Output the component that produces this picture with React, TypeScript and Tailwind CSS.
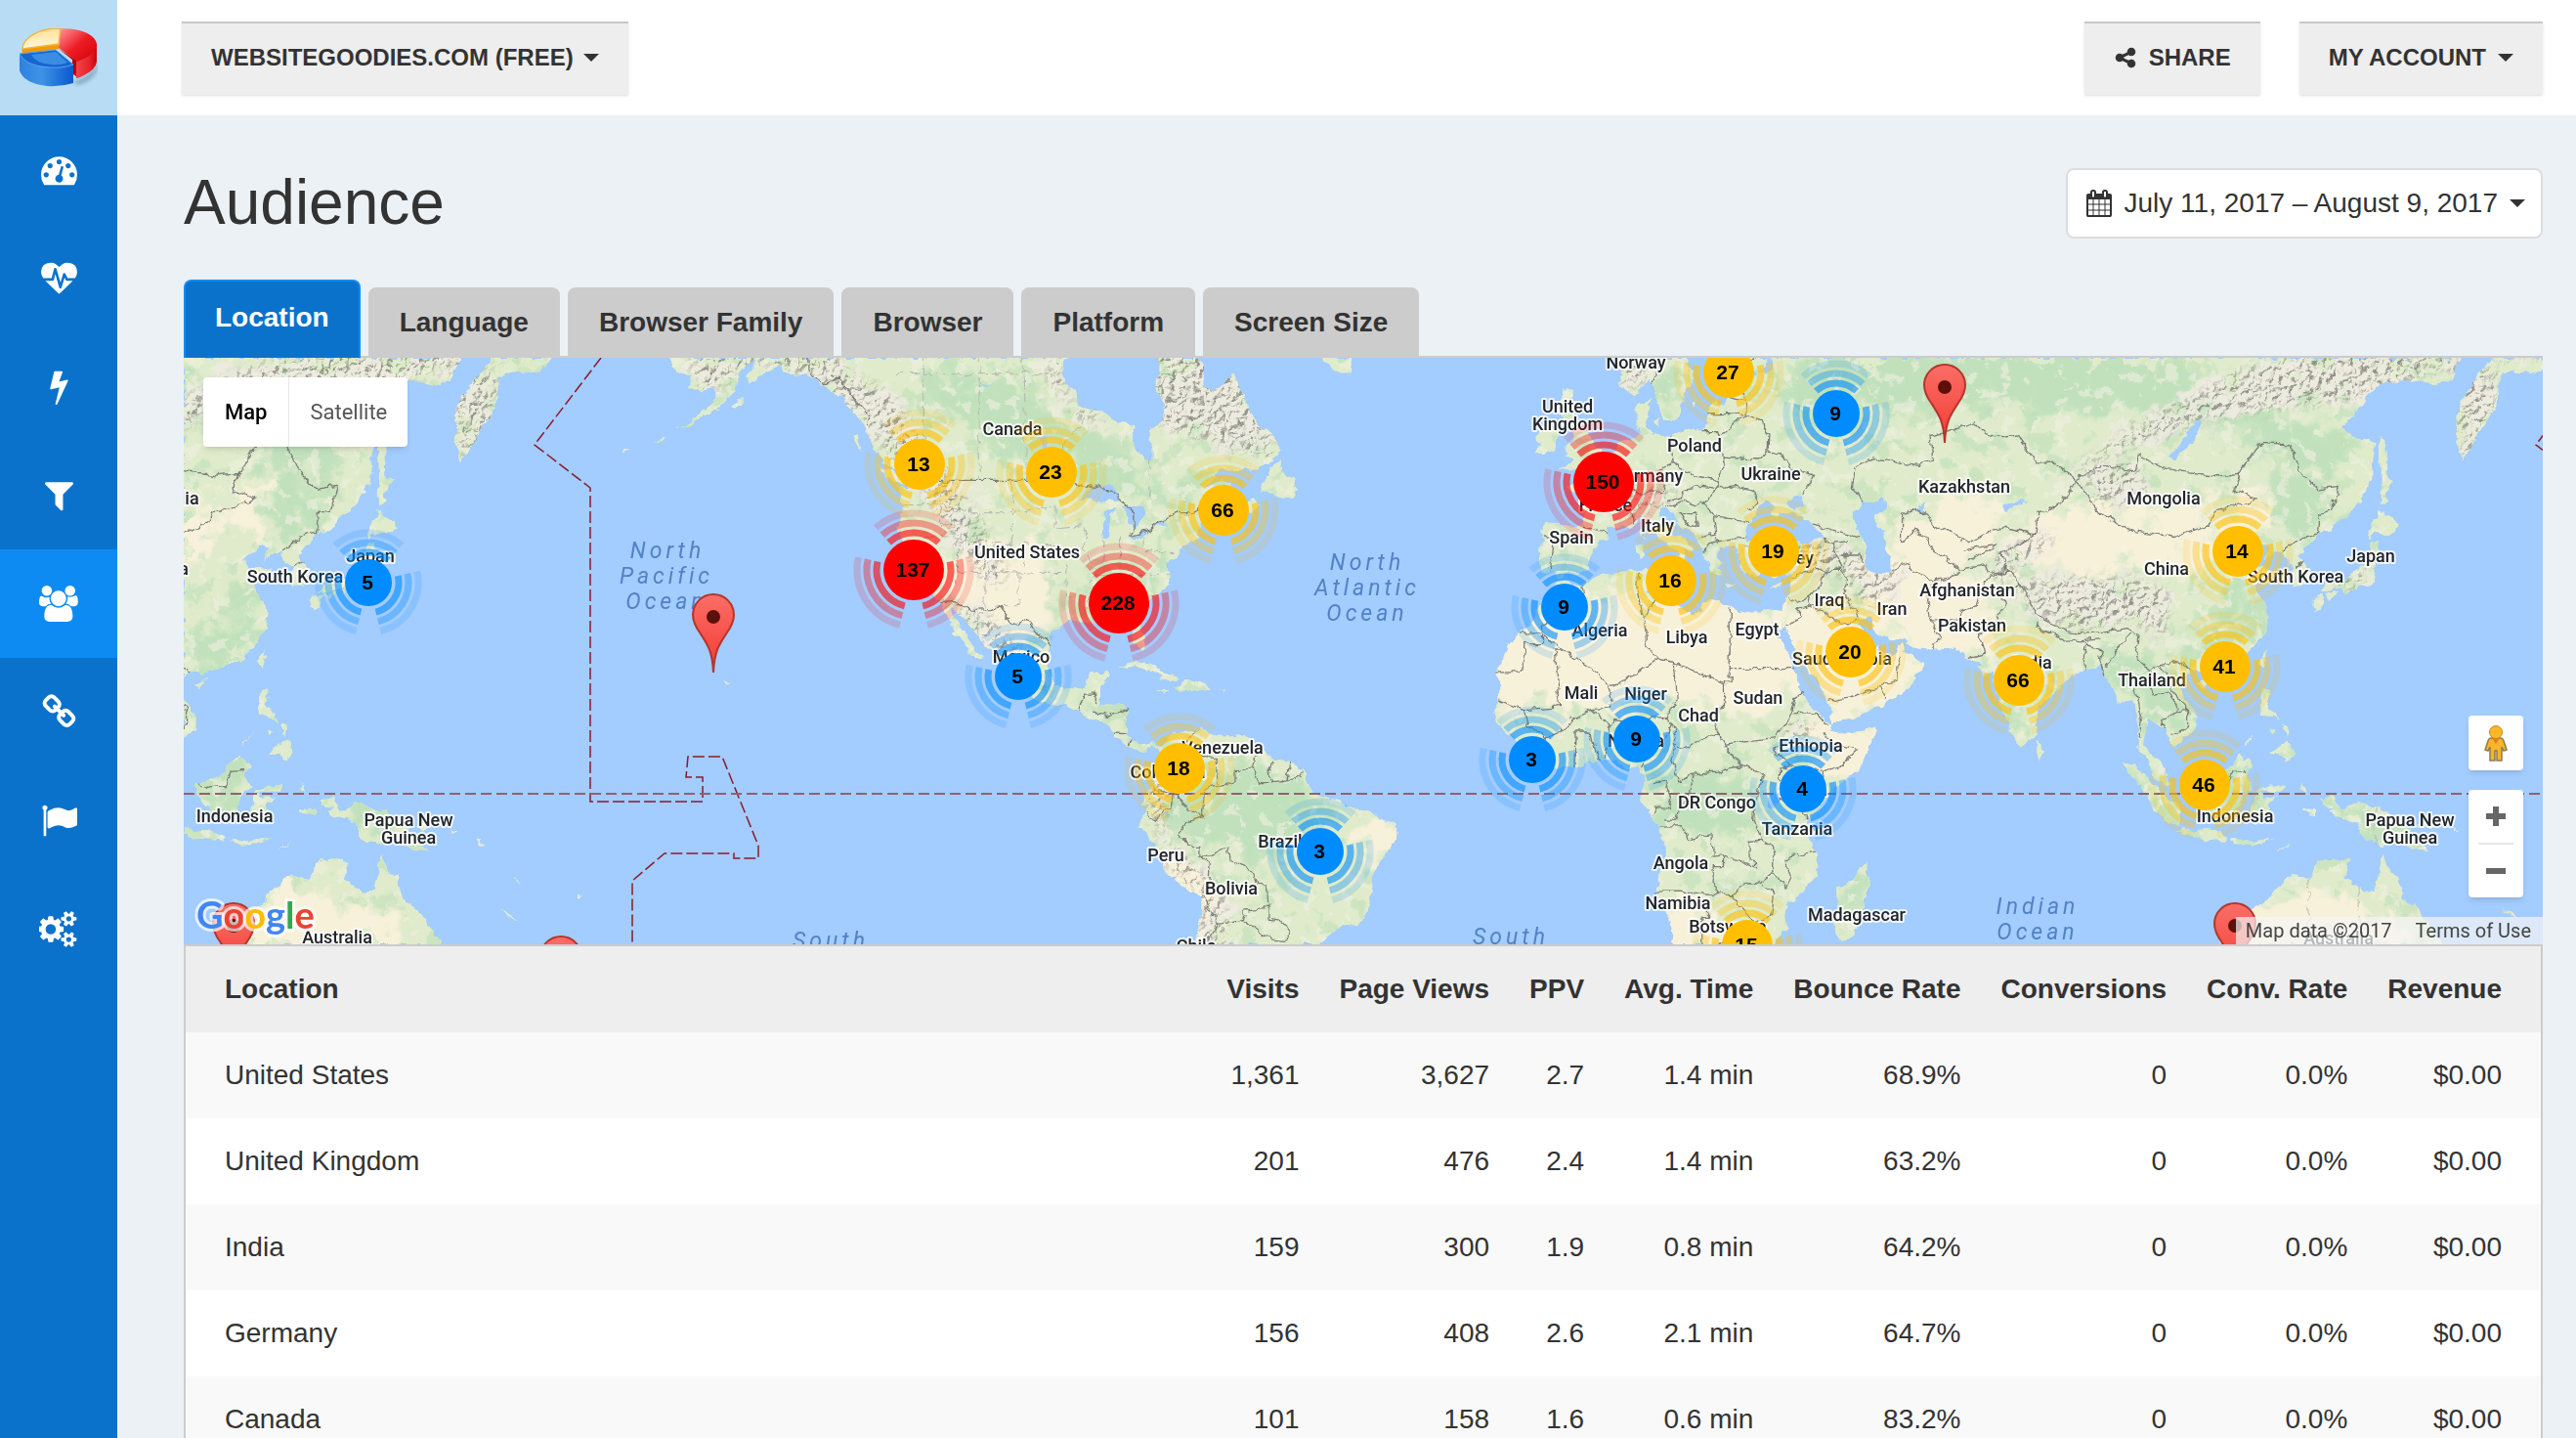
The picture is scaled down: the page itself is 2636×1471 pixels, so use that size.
import React from 'react';
import { clsx } from 'clsx';

// ---------------------------------------------------------------------------
// Icons
// ---------------------------------------------------------------------------

const icons = {
  dashboard: {
    width: 1792,
    d: 'M384 1152q0-53-37.5-90.5t-90.5-37.5-90.5 37.5-37.5 90.5 37.5 90.5 90.5 37.5 90.5-37.5 37.5-90.5zm192-448q0-53-37.5-90.5t-90.5-37.5-90.5 37.5-37.5 90.5 37.5 90.5 90.5 37.5 90.5-37.5 37.5-90.5zm428 481l101-382q6-26-7.5-48.5t-38.5-29.5-48 6.5-30 39.5l-101 382q-60 5-107 43.5t-63 98.5q-20 77 20 146t117 89 146-20 89-117q16-60-6-117t-72-91zm660-33q0-53-37.5-90.5t-90.5-37.5-90.5 37.5-37.5 90.5 37.5 90.5 90.5 37.5 90.5-37.5 37.5-90.5zm-640-640q0-53-37.5-90.5t-90.5-37.5-90.5 37.5-37.5 90.5 37.5 90.5 90.5 37.5 90.5-37.5 37.5-90.5zm448 192q0-53-37.5-90.5t-90.5-37.5-90.5 37.5-37.5 90.5 37.5 90.5 90.5 37.5 90.5-37.5 37.5-90.5zm320 448q0 261-141 483-19 29-54 29h-1402q-35 0-54-29-141-221-141-483 0-182 71-348t191-286 286-191 348-71 348 71 286 191 191 286 71 348z',
  },
  heartbeat: {
    width: 1792,
    d: 'M1280 1024h305q-5 6-10 10.5t-9 7.5l-3 4-623 600q-18 18-44 18t-44-18l-624-602q-5-2-21-20h369q22 0 39.5-13.5t22.5-34.5l70-281 190 667q6 20 23 33t39 13q21 0 38-13t23-33l146-485 56 112q18 35 57 35zm512-428q0 145-103 300h-369l-111-221q-8-17-25.5-27t-36.5-8q-45 5-56 46l-129 430-196-686q-6-20-23.5-33t-39.5-13-39 13.5-22 34.5l-116 464h-423q-103-155-103-300 0-220 127-344t351-124q62 0 126.5 21.5t120 58 95.5 68.5 76 68q36-36 76-68t95.5-68.5 120-58 126.5-21.5q224 0 351 124t127 344z',
  },
  bolt: {
    width: 1792,
    d: 'M1333 566q18 20 7 44l-540 1157q-13 25-42 25-4 0-14-2-17-5-25.5-19t-4.5-30l197-808-406 101q-4 1-12 1-18 0-31-11-18-15-13-39l201-825q4-14 16-23t28-9h328q19 0 32 12.5t13 29.5q0 8-5 18l-171 463 396-98q8-2 12-2 19 0 34 15z',
  },
  filter: {
    width: 1792,
    d: 'M1595 295q17 41-14 70l-493 493v742q0 42-39 59-13 5-25 5-27 0-45-19l-256-256q-19-19-19-45v-486l-493-493q-31-29-14-70 17-39 59-39h1280q42 0 59 39z',
  },
  users: {
    width: 1920,
    d: 'M593 896q-162 5-265 128h-134q-82 0-138-40.5t-56-118.5q0-353 124-353 6 0 43.5 21t97.5 42.5 119 21.5q67 0 133-23-5 37-5 66 0 159 90 283zm1071 637q0 120-73 189.5t-194 69.5h-874q-121 0-194-69.5t-73-189.5q0-53 3.5-103.5t14-109 26.5-108.5 43-97.5 62-81 85.5-53.5 111.5-20q10 0 43 21.5t73 48 107 48 135 21.5 135-21.5 107-48 73-48 43-21.5q61 0 111.5 20t85.5 53.5 62 81 43 97.5 26.5 108.5 14 109 3.5 103.5zm-1024-1277q0 106-75 181t-181 75-181-75-75-181 75-181 181-75 181 75 75 181zm704 384q0 159-112.5 271.5t-271.5 112.5-271.5-112.5-112.5-271.5 112.5-271.5 271.5-112.5 271.5 112.5 112.5 271.5zm576 225q0 78-56 118.5t-138 40.5h-134q-103-123-265-128 90-124 90-283 0-29-5-66 66 23 133 23 59 0 119-21.5t97.5-42.5 43.5-21q124 0 124 353zm-128-609q0 106-75 181t-181 75-181-75-75-181 75-181 181-75 181 75 75 181z',
  },
  link: {
    width: 1792,
    d: 'M1520 1216q0-40-28-68l-208-208q-28-28-68-28-42 0-72 32 3 3 19 18.5t21.5 21.5 15 19 13 25.5 3.5 27.5q0 40-28 68t-68 28q-15 0-27.5-3.5t-25.5-13-19-15-21.5-21.5-18.5-19q-33 31-33 73 0 40 28 68l206 207q27 27 68 27 40 0 68-26l147-146q28-28 28-67zm-703-705q0-40-28-68l-206-207q-28-28-68-28-39 0-68 27l-147 146q-28 28-28 67 0 40 28 68l208 208q27 27 68 27 42 0 72-31-3-3-19-18.5t-21.5-21.5-15-19-13-25.5-3.5-27.5q0-40 28-68t68-28q15 0 27.5 3.5t25.5 13 19 15 21.5 21.5 18.5 19q33-31 33-73zm895 705q0 120-85 203l-147 146q-83 83-203 83-121 0-204-85l-206-207q-83-83-83-203 0-123 88-209l-88-88q-86 88-208 88-120 0-204-84l-208-208q-84-84-84-204t85-203l147-146q83-83 203-83 121 0 204 85l206 207q83 83 83 203 0 123-88 209l88 88q86-88 208-88 120 0 204 84l208 208q84 84 84 204z',
  },
  flag: {
    width: 1792,
    d: 'M320 256q0 72-64 110v1266q0 13-9.5 22.5t-22.5 9.5h-64q-13 0-22.5-9.5t-9.5-22.5v-1266q-64-38-64-110 0-53 37.5-90.5t90.5-37.5 90.5 37.5 37.5 90.5zm1472 64v763q0 25-12.5 38.5t-39.5 27.5q-215 116-369 116-61 0-123.5-22t-108.5-48-115.5-48-142.5-22q-192 0-464 146-17 9-33 9-26 0-45-19t-19-45v-742q0-32 31-55 21-14 79-43 236-120 421-120 107 0 200 29t219 88q38 19 88 19 54 0 117.5-21t110-47 88-47 54.5-21q26 0 45 19t19 45z',
  },
  cogs: {
    width: 1920,
    d: 'M832 896q0-106-75-181t-181-75-181 75-75 181 75 181 181 75 181-75 75-181zm768 512q0-52-38-90t-90-38-90 38-38 90q0 53 37.5 90.5t90.5 37.5 90.5-37.5 37.5-90.5zm0-1024q0-52-38-90t-90-38-90 38-38 90q0 53 37.5 90.5t90.5 37.5 90.5-37.5 37.5-90.5zm-384 421v185q0 10-7 19.5t-16 10.5l-155 24q-11 35-32 76 34 48 90 115 7 11 7 20 0 12-7 19-23 30-82.5 89.5t-78.5 59.5q-11 0-21-7l-115-90q-37 19-77 31-11 108-23 155-7 24-30 24h-186q-11 0-20-7.5t-10-17.5l-23-153q-34-10-75-31l-118 89q-7 7-20 7-11 0-21-8-144-133-144-160 0-9 7-19 10-14 41-53t47-61q-23-44-35-82l-152-24q-10-1-17-9.5t-7-19.5v-185q0-10 7-19.5t16-10.5l155-24q11-35 32-76-34-48-90-115-7-11-7-20 0-12 7-20 22-30 82-89t79-59q11 0 21 7l115 90q34-18 77-32 11-108 23-154 7-24 30-24h186q11 0 20 7.5t10 17.5l23 153q34 10 75 31l118-89q8-7 20-7 11 0 21 8 144 133 144 160 0 8-7 19-12 16-42 54t-45 60q23 48 34 82l152 23q10 2 17 10.5t7 19.5zm640 533v140q0 16-149 31-12 27-30 52 51 113 51 138 0 4-4 7-122 71-124 71-8 0-46-47t-52-68q-20 2-30 2t-30-2q-14 21-52 68t-46 47q-2 0-124-71-4-3-4-7 0-25 51-138-18-25-30-52-149-15-149-31v-140q0-16 149-31 13-29 30-52-51-113-51-138 0-4 4-7 4-2 35-20t59-34 30-16q8 0 46 46.5t52 67.5q20-2 30-2t30 2q51-71 92-112l6-2q4 0 124 70 4 3 4 7 0 25-51 138 17 23 30 52 149 15 149 31zm0-1024v140q0 16-149 31-12 27-30 52 51 113 51 138 0 4-4 7-122 71-124 71-8 0-46-47t-52-68q-20 2-30 2t-30-2q-14 21-52 68t-46 47q-2 0-124-71-4-3-4-7 0-25 51-138-18-25-30-52-149-15-149-31v-140q0-16 149-31 13-29 30-52-51-113-51-138 0-4 4-7 4-2 35-20t59-34 30-16q8 0 46 46.5t52 67.5q20-2 30-2t30 2q51-71 92-112l6-2q4 0 124 70 4 3 4 7 0 25-51 138 17 23 30 52 149 15 149 31z',
  },
  share: {
    width: 1792,
    d: 'M1344 1024q133 0 226.5 93.5t93.5 226.5-93.5 226.5-226.5 93.5-226.5-93.5-93.5-226.5q0-12 2-34l-360-180q-92 86-218 86-133 0-226.5-93.5t-93.5-226.5 93.5-226.5 226.5-93.5q126 0 218 86l360-180q-2-22-2-34 0-133 93.5-226.5t226.5-93.5 226.5 93.5 93.5 226.5-93.5 226.5-226.5 93.5q-126 0-218-86l-360 180q2 22 2 34t-2 34l360 180q92-86 218-86z',
  },
  calendar: {
    width: 1792,
    d: 'M192 1664h288v-288h-288v288zm352 0h320v-288h-320v288zm-352-352h288v-320h-288v320zm352 0h320v-320h-320v320zm-352-384h288v-288h-288v288zm736 736h320v-288h-320v288zm-384-736h320v-288h-320v288zm768 736h288v-288h-288v288zm-384-352h320v-320h-320v320zm-352-864v-288q0-13-9.5-22.5t-22.5-9.5h-64q-13 0-22.5 9.5t-9.5 22.5v288q0 13 9.5 22.5t22.5 9.5h64q13 0 22.5-9.5t9.5-22.5zm736 864h288v-320h-288v320zm-384-384h320v-288h-320v288zm384 0h288v-288h-288v288zm32-480v-288q0-13-9.5-22.5t-22.5-9.5h-64q-13 0-22.5 9.5t-9.5 22.5v288q0 13 9.5 22.5t22.5 9.5h64q13 0 22.5-9.5t9.5-22.5zm384-64v1280q0 52-38 90t-90 38h-1408q-52 0-90-38t-38-90v-1280q0-52 38-90t90-38h128v-96q0-66 47-113t113-47h64q66 0 113 47t47 113v96h384v-96q0-66 47-113t113-47h64q66 0 113 47t47 113v96h128q52 0 90 38t38 90z',
  },
};

type IconName = keyof typeof icons;

const Icon = ({ name, className }: { name: IconName; className?: string }) => (
  <svg viewBox={`0 0 ${icons[name].width} 1792`} className={className} fill="currentColor" aria-hidden="true">
    <path d={icons[name].d} />
  </svg>
);

const Caret = () => (
  <svg viewBox="0 0 16 8" className="h-2 w-4" fill="currentColor" aria-hidden="true">
    <path d="M0 0h16L8 8z" />
  </svg>
);

const Logo = () => (
  <svg viewBox="0 0 80 60" className="h-[60px] w-20" aria-hidden="true">
    <defs>
      <linearGradient id="logo-red" x1="0" y1="0" x2="1" y2="1">
        <stop offset="0" stopColor="#ff9ba0" />
        <stop offset="0.5" stopColor="#ee1c25" />
        <stop offset="1" stopColor="#d00006" />
      </linearGradient>
      <linearGradient id="logo-red-side" x1="0" y1="0" x2="1" y2="0">
        <stop offset="0" stopColor="#f0444a" />
        <stop offset="0.6" stopColor="#e8262d" />
        <stop offset="1" stopColor="#c9050b" />
      </linearGradient>
      <linearGradient id="logo-yellow" x1="0" y1="0" x2="0" y2="1">
        <stop offset="0" stopColor="#ffe19a" />
        <stop offset="1" stopColor="#fff6dc" />
      </linearGradient>
      <linearGradient id="logo-blue" x1="0" y1="0" x2="1" y2="0">
        <stop offset="0" stopColor="#2b82e0" />
        <stop offset="0.4" stopColor="#3f93e6" />
        <stop offset="1" stopColor="#0a58cf" />
      </linearGradient>
      <filter id="logo-shadow">
        <feGaussianBlur stdDeviation="2" />
      </filter>
    </defs>
    <path d="M56 54q20-5 24-22v8q-4 14-22 18z" fill="#5c7f9c" opacity="0.6" filter="url(#logo-shadow)" />
    <path d="M40 21L60 34v17l-6-5V32z" fill="#b30006" />
    <path d="M58 34v17q3 0 8-3 12-6 13-14V18z" fill="url(#logo-red-side)" />
    <path d="M42 0q22 0 32 8 6 5 5 12-4 8-20 14L40 20z" fill="url(#logo-red)" />
    <path d="M3 20q-1 3 0 7l37-6v-6z" fill="#f09a0a" />
    <path d="M42 0Q20 0 9 10 3 15 3 21l37-5z" fill="url(#logo-yellow)" stroke="#f3b53c" strokeWidth="1.5" />
    <path d="M0 26v17q4 13 28 16 14 1 27-3V37z" fill="url(#logo-blue)" />
    <path d="M0 26l37-4 18 15q-10 4-25 3Q5 38 0 26z" fill="#1765cf" stroke="#55a4f2" strokeWidth="1" />
    <path d="M12 27l25-3 12 11q-8 3-17 2-15-1-20-10z" fill="#3a8de4" />
  </svg>
);

// ---------------------------------------------------------------------------
// Map data. Coordinates are "lon,lat" pairs.
// ---------------------------------------------------------------------------

const landShapes = [
  // Americas
  '-168,66 -161,66.5 -162,64.5 -165,64.3 -161,63.5 -164.5,63 -166,61.7 -165,60.5 -162,59.9 -162,58.7 -158.8,58.5 -157.5,58.7 -158,57.5 -160.5,56 -163,55 -164.8,54.6 -162,55.1 -160,55.8 -157,56.8 -154,58.3 -153.5,59.5 -151.8,60.8 -150,61.2 -151.5,60 -151.8,59.2 -149.5,59.8 -148,60.2 -146,60.7 -144,60 -141,59.9 -139.5,59.6 -137,58.5 -135,58.2 -133.5,57 -132,56 -130.5,54.8 -130,53.8 -128.5,52.5 -127.5,51.2 -125,50.1 -123.2,49.2 -122.5,48 -124.6,48.3 -124,46.3 -124.2,44 -124.4,42.8 -124.1,40.8 -123.7,39 -122.5,37.7 -121.9,36.6 -120.6,34.6 -118.5,34 -117.2,32.8 -116.6,31.5 -115.8,30.3 -115.2,28.8 -114.2,28 -115,27.8 -114,27 -112.8,26.4 -112.1,24.9 -110.5,23.4 -109.5,23.1 -109.7,23.9 -110.6,24.5 -111.4,26.2 -112.7,27.8 -113.4,29 -114.7,30.5 -114.9,31.7 -113.7,31.4 -112.8,30.2 -111.3,28.2 -110,27.1 -109.3,26 -108,24.9 -106.4,23.2 -105.5,21.8 -105.6,20.4 -104.3,19.2 -102,18 -99.8,16.8 -97.8,15.9 -95.8,15.8 -94.5,16.2 -93,15 -91.5,13.9 -89.5,13.3 -87.6,13 -86.8,12 -85.7,10.9 -85.8,10.1 -84.8,9.8 -83.6,8.6 -82.8,8.2 -81.2,7.6 -80.2,7.4 -80,8.2 -79,8.9 -78.2,8 -77.4,7.2 -77.5,5.5 -77.2,4 -78.6,2.3 -79,1.5 -80,0.5 -80.1,-0.8 -80.9,-2 -80,-2.6 -80.3,-3.4 -81.3,-4.4 -81.2,-6 -79.8,-7.3 -78.5,-9.5 -77.2,-12 -76.2,-13.9 -74.5,-15.8 -72,-17.2 -70.4,-18.4 -70.1,-21 -70.5,-24 -70.9,-27 -71.5,-31 -60,-40 -53,-33 -50,-29.5 -48.6,-26 -48,-25.2 -46.5,-24 -44.5,-23 -42,-22.9 -40.8,-21.8 -39.7,-19.5 -39.2,-17 -38.9,-13.5 -37.5,-11.8 -36.2,-10 -35,-8 -34.9,-6.8 -35.4,-5.2 -37.2,-4.8 -38.6,-3.6 -40.5,-2.8 -42.5,-2.7 -44.3,-2.6 -45,-1.4 -47.5,-0.6 -48.5,-1 -50,0.2 -50.8,1.8 -51.8,4.2 -54,5.8 -57,6 -59,8.3 -61,9.3 -62,10.6 -64.5,10.1 -66,10.5 -68.2,10.7 -69.8,11.6 -70,12.1 -71.4,11 -72,11.6 -73.2,11.3 -74.9,11 -75.6,10.4 -76.8,8.6 -77.4,8.5 -79,9.5 -80.8,8.9 -82.2,9.1 -83.6,10.8 -83.7,12.4 -83.3,14.8 -85,15.9 -87.8,15.9 -88.6,16 -88.2,18.2 -87.5,19.5 -87,21.4 -88.5,21.5 -90.3,21 -90.8,19.2 -92,18.6 -94.5,18.2 -96,19 -97.3,20.8 -97.8,22.6 -97.4,25.5 -97.2,27.6 -95.2,29 -93.8,29.7 -91.5,29.4 -90.2,29.1 -89.3,29.3 -89.6,30.2 -87.5,30.3 -85.5,29.9 -84,30.1 -82.8,29 -82.7,27.6 -81.8,26 -81,25.2 -80.3,25.4 -80.1,26.9 -80.8,28.6 -81.4,30.6 -81,32 -79.3,33.1 -77.8,34 -76.5,34.7 -75.6,35.3 -76,36.9 -76.3,38.8 -75,38.6 -74.2,39.6 -74,40.6 -72,41.1 -70.2,41.7 -70.8,42.7 -70,43.8 -67.8,44.5 -66.5,45.2 -64.8,45.8 -66,43.9 -65.3,43.6 -63.5,44.6 -61,45.3 -60,46 -61,46.8 -63,45.9 -64.8,46.6 -65,47.8 -64.4,48.8 -66.5,49.1 -69.5,48 -71,46.9 -68.5,48.8 -66.8,50.1 -64,50.3 -60,50.2 -57.2,51.4 -55.8,52.3 -57.5,54.4 -60,55.2 -61.5,56.5 -62.5,58.2 -64.5,60.2 -65.5,59.5 -66.3,58.8 -68,58.5 -69.5,58.9 -69.8,60.8 -71.5,61.5 -74,62.3 -78,62.5 -77.5,60 -78.5,58.7 -76.6,57.2 -77,55.5 -79.5,54.7 -79,53 -79,51.5 -80.3,51.2 -82,52.9 -82.2,55.1 -85,55.3 -88,56.5 -92,57 -93,58.7 -94.8,59.2 -94.8,61 -93.5,62 -91,63.5 -90,66',
  '-59.3,47.6 -57.5,50.6 -55.5,51.6 -56,50 -53.5,49.2 -52.7,47.5 -53.8,46.8 -55.8,46.9',
  '-128.3,50.7 -125.2,50 -123.5,48.4 -125.5,48.8',
  '-133,54 -131.7,54 -131.2,52.2',
  '-154.5,57 -152.5,58 -152.5,57.3',
  '-168.5,53.3 -166.5,54 -167,53.3',
  '-174,52.1 -174,52.5 -172.5,52.4',
  '-84.9,21.9 -83,23 -80.5,23.1 -77,21.6 -74.2,20.2 -77.6,19.9 -77.2,20.7 -79.5,21.6 -82,22.4',
  '-74.4,18.4 -73.3,19.9 -70,19.8 -68.4,18.6 -70.5,18.2 -72.5,18.1',
  '-78.3,18.4 -76.3,18.1 -77,17.8',
  '-67.2,18.4 -65.7,18.3 -66,18',
  '-156,20.2 -154.9,19.5 -155.7,19',
  '-50,63 -48,61 -45.5,60.2 -43.5,60 -42.5,61.5 -42,63',
  // Eurasia
  '5,61.9 5,60 5.6,58.8 7.5,58.1 9.8,59 10.6,59.5 11.3,58.8 12.4,56.6 13,55.5 14.3,55.6 16,56.3 16.8,58.4 18.8,59.8 17.3,61 17.4,62.5 21,63 21.5,61 22.8,60 25,60.2 28.5,60.6 30,59.9 27.8,59.5 24,59.3 23.5,58.7 24.4,58.2 24.2,57.1 22.5,57.6 21.2,56.8 21,55.3 19.8,54.5 18.5,54.7 16.5,54.4 14.2,53.9 11,54.1 10.8,54.4 9.9,55 10.3,56.4 10.6,57.6 8.2,57 8.2,55.5 8.8,54.1 7,53.5 5,53.2 4,51.9 2.5,51.1 1.6,50.4 0.2,49.6 -1.3,49.5 -1.9,48.7 -4.6,48.5 -4.3,47.8 -2.2,47.2 -1.2,45.8 -1.5,43.5 -4,43.4 -8.2,43.7 -9.1,42.8 -8.8,41 -9.4,38.8 -8.9,37.1 -6.5,37 -5.6,36 -4.4,36.7 -2,36.8 -0.6,37.8 0,39 0.2,40.5 3,41.8 3.1,43.2 5,43.3 6.8,43.2 8.8,44.4 10.2,43.8 12.2,41.8 14.3,40.8 15.7,39.8 16.1,38 16.6,38.6 17.1,39.2 16.8,40.4 18.4,39.9 18,40.7 16,41.8 14,42.6 12.5,44.3 12.5,45.5 13.7,45.5 14.5,45.1 16,43.6 18.5,42.3 19.5,41 20.3,39.3 21.3,38.2 21.7,36.9 23,36.5 23.3,37.8 24,38 22.8,39.3 22.8,40.5 24,40.3 26,40.8 26.2,40 26.8,38.5 27.5,37 29.5,36.3 31,36.8 33,36.1 34.5,36.7 36,36.7 35.8,35 34.9,32.8 34.2,31.3 32.5,31.2 32.6,29.9 34.2,27.9 34.9,29.4 35.5,27.5 37.2,25 39,21.8 40.8,19.5 42.6,16.5 43.3,12.7 45,12.8 48.5,14 52,15.6 55,17.2 57.7,19.2 59.8,22.5 58.5,23.7 56.6,24.8 56.3,26.2 54.5,24.3 51.8,24.1 51.4,25.9 50.8,25.3 50,26.6 48.2,29 48,30 50,30.1 51,28 54,26.6 56.8,27.1 57.5,25.6 61.5,25.1 66.5,25.3 67.5,23.8 70,22.8 69,22.3 70.5,20.8 72.5,21.5 72.8,19 73.5,16 74.8,13 76.2,10 77.5,8.1 78.3,9 79.9,10.4 80.2,13.2 80.2,15.5 82.3,16.6 85,19.5 87,21.4 90,22 91.8,22.5 92.3,20.8 94.3,18 94.4,16 96.8,16.8 97.7,15.8 98.6,12 98.3,8.2 100.2,6.2 101.3,3 103.5,1.3 104.2,1.5 103.4,4 102.2,6.2 100.5,7.3 99.3,9.3 100,12 100.1,13.4 101,12.7 102.8,11.8 103.6,10.5 104.8,8.7 106.6,9.8 109,11.5 109.2,13.5 107.2,16.6 105.8,18.8 106.7,20.5 108,21.6 109.8,21.4 110.3,20.4 110.6,21.3 113.5,22.2 116.5,23 119,25.3 121.6,28.3 121.9,30.5 121.5,32 119.3,34.8 120.8,36.2 122.5,37.1 120.5,37.8 119,37.3 117.8,38.8 119.5,39.8 121.3,40.9 122,40.3 121.3,38.9 124.3,40 125.3,38.5 126.5,37.5 126.3,34.8 129,35.2 129.4,37 127.5,39.3 129.8,41.2 130.8,42.4 133,42.8 135.5,44.5 138.3,46.5 140.5,49 140.5,51.5 141.3,53.2 137.5,53.8 135.2,54.8 138.5,57 142,59.2 148,59.4 152,59 155,59.5 156.5,61.5 160,61.9 163.5,62.3 161,60.7 157,58 155.8,56.5 155.7,53 156.8,51 158.5,52.9 160,54.5 162,56 163.3,57.8 163.5,59.8 166,60.2 170.5,60 173,61.5 177,62.5 180,63 180,68 5,68',
  // Africa
  '-5.9,35.8 -2,35.1 3,36.9 9.8,37.3 11,36.8 10.2,34.3 13,32.9 15.3,32.3 19,30.3 20.2,32.3 23,32.7 27,31.2 29,30.9 31,31.5 32.5,31.2 32.5,29.9 33.8,27.3 35.5,24 37.2,21 37.4,18.8 39.7,15.2 43,12.5 43.2,11.4 46,10.7 51.2,11.9 50.8,9.5 48,4.5 44,1 41.5,-1.8 39.5,-4.6 38.8,-6.5 39.4,-8.5 40.6,-10.8 40.7,-14.8 38,-17.2 35,-19.8 35.5,-23.5 32.8,-25.5 32.8,-28 28,-34 18,-34 15,-27 14.4,-22.5 12,-18 12.4,-14 13.7,-11 13,-8.8 12.2,-5.8 9.6,-2.4 8.8,-0.8 9.6,1 9.8,3.3 8.5,4.6 6.2,4.3 4.5,6.2 1,6 -2,4.8 -4.5,5.2 -7.5,4.4 -10,6 -13,8 -14,10 -16.7,12.3 -17.4,14.7 -16.3,17.5 -16.3,19.5 -17,21 -16,23.7 -14.5,26.3 -12.9,27.9 -10,29.6 -9.7,31.5 -8,33.5',
  '49.3,-12.1 50.4,-15.6 49.5,-17.8 47.2,-25 45,-25.5 43.4,-22.5 44.4,-19.8 44.3,-16.6 47,-15.3',
  // British Isles, Baltic, Mediterranean
  '-5.6,50.1 -3.5,50.3 1.3,51 1.6,52.7 0.3,53 -1.2,54.6 -2,55.8 -3.2,56.2 -1.9,57.5 -4,57.7 -3.2,58.6 -5,58.6 -6,57 -5,55.8 -4.8,54.8 -3,54.2 -3.2,53.4 -4.6,53 -4.8,52 -3.2,51.4',
  '-10,52 -6.3,52.2 -6,53.5 -5.5,54.6 -7.4,55.3 -10,54.2 -9,53.2',
  '11.2,55.7 12.5,56 12,55',
  '18.3,57.3 19,57.9 18.5,57',
  '8.3,40.9 9.6,40.9 9.5,39.2 8.5,39',
  '8.7,42.5 9.4,43 9.3,41.5',
  '12.5,38 15.6,38.2 15.1,36.7',
  '23.6,35.5 26.2,35.2 24.8,34.9',
  '32.4,35 34.5,35.6 33.5,34.6',
  // Asian islands
  '79.8,8 80.2,9.7 81.8,7.5 80.6,6',
  '108.7,19.2 110.8,20 109.8,18.4',
  '120.1,23 121.6,25.2 120.9,22',
  '131,34 132.5,35.4 136,35.7 137.2,37.3 139.5,38.5 140.2,41.2 141.4,41.3 142,39.5 141,38.2 140.8,35.8 139.8,35 138.2,34.7 136.8,34.4 135.7,33.6 135,34.7 132.3,34',
  '130,33.5 131.8,33.6 131.3,31.4 130.2,31.3 129.8,32.7',
  '132.2,33.6 134.6,34.2 133,32.9',
  '140,42.5 141.8,45.4 145.5,43.3 143.2,42 141,42.5 140.2,41.5',
  '142.2,54.2 143.2,52.5 143.3,49.5 144.6,49 142.8,47.5 143.3,46.6 142,46 142,50 141.8,53',
  '120.4,16.2 120.8,18.5 122.2,18.4 121.6,15.8 124,13 122,13.8 120.6,13.9',
  '122,7 123.8,8.4 125.5,9.7 126.5,7.5 125.4,5.7 124,7',
  '122,11.8 123.2,11.2 122.2,10.5',
  '124.3,12.5 125.5,12.2 125,10.2',
  '117.3,8.5 119.5,11.2 118,9',
  '109,1.5 111.4,2.6 113.5,3.4 116.8,7 119.2,5.2 117.6,3.5 118.9,1 117.4,0.2 116.2,-3.6 114.5,-4 111.5,-3.3 110,-1.3',
  '95.3,5.6 97.5,5.2 100.5,2.3 103.5,-0.5 106,-3 105.8,-5.8 104,-5.2 101.3,-2.7 98.8,1.5',
  '105.3,-6.7 106.5,-6 108.6,-6.7 111,-6.5 114.4,-7.8 114.3,-8.6 108.5,-7.8',
  '115,-8.3 117,-8.2 119,-8.3 122.8,-8.2 120,-9 116,-9',
  '123.6,-10.3 127,-8.4 125,-9.3',
  '119,-3.4 119.8,0.5 121,1.2 124.8,1.5 124.3,0.4 120.4,0.4 121,-1 123.2,-0.8 121.7,-2 122.8,-4.3 121.4,-4.5 120.4,-2.9 120.3,-5.5 119.5,-5.4',
  '127.5,1 128,2 128.6,0.3',
  '128,-2.9 130.8,-3 130.5,-3.7 128,-3.5',
  '131,-0.8 134,-0.8 135,-3.3 137.8,-1.5 141,-2.6 144.5,-3.9 147.8,-6.2 147.2,-7 150.8,-10.3 147.5,-9.8 144.5,-7.7 142.5,-9.2 139,-8.1 137.8,-5.2 133.8,-4 132.8,-2.8 134,-2.4 132,-2.1',
  '148.4,-5.7 151.5,-5 152.2,-4.2 151.8,-5.5 149.5,-6.3',
  '155,-6 156,-6.8 155.4,-6.8',
  '159.6,-8 161,-9 160,-9',
  '164,-20.2 167,-22.2 165.5,-21.7',
  '166.6,-15 167.4,-16.2 166.8,-15.8',
  '177.3,-17.6 178.6,-17.8 178,-18.4',
  // Australia
  '113.7,-22.5 114.2,-21.8 117,-20.7 119,-20 121.5,-19 122.3,-17.2 124,-16.3 126,-14.2 128,-14.8 129.6,-14.9 130.6,-12.6 132.6,-11.5 136.5,-12 136,-13.5 135.5,-15 139.3,-17.4 140.9,-17.3 141.6,-14.5 142.5,-10.8 143.7,-13.8 145.3,-15 146.2,-18.5 149,-20.5 150.8,-23.3 153,-25.3 153.5,-29 150,-38 115,-35 113.5,-26',
];

const lakeShapes = [
  '-92,46.7 -89,48.3 -86.5,48.7 -84.7,46.6 -87.5,46.5',
  '-87.8,42 -87,41.7 -86.3,43 -86.3,44.7 -85,45.9 -87.3,45.2',
  '-84.5,45.9 -80.5,45.8 -80,44.6 -81.7,43.2 -82.5,43.1 -83.5,44.3',
  '-83.3,41.8 -79,42.8 -81.5,41.6',
  '-79.7,43.3 -76.5,44.2 -76.3,43.5',
  '-99,53.8 -97.8,53.8 -96.5,50.6 -97.2,51',
  '-111,58.8 -107,59.4 -109,59',
  '28,41.3 27.6,42.6 28.7,43.8 30,45.8 31.5,46.6 33,46 32.5,45.3 33.6,44.5 35.5,45 36.6,45.2 38.5,44.2 41.3,42.5 41.4,41.5 38,41 35,42 32,41.6 29.3,41.2',
  '35,46.3 38,47.2 38,46 36.5,45.4',
  '27.3,40.6 29,40.9 28.8,40.4',
  '47,44.8 49,46.4 52.8,46.8 53,45.3 51.2,44.5 51,43.2 52.8,42.5 52.9,40.2 53.8,39 53.9,37 51,36.7 49.2,37.6 49.3,39.3 49.5,40.5 48.2,42.2 47.4,43.5',
  '58.3,45.5 60.5,46.5 59.5,45',
  '74,45.5 76,46.6 79,46.7 76,46.1 74.5,45',
  '103.7,51.6 106,53 108.8,55.6 109.8,55.6 108.2,53.2 105,51.5',
  '31,60.5 32,61.5 33,60.5 31.5,59.9',
  '31.8,-0.5 33.8,0.3 34,-1 32.8,-2.5 31.8,-2',
];

const desertShapes = [
  '-18,29 -6,31 8,34 12,33 20,33 34,32 36,32 48,31 53,27 60,24 58,17 45,12 43,13 38,17 30,16 15,14.5 0,15 -18,15.5',
  '48,37 54,43 62,47 72,47 74,44 68,39 72,31 71,24 60,24 50,31',
  '74,38 76,42 84,46 95,45 110,45 116,43 108,38 98,38 88,36',
  '-119,38 -112,42 -104,42 -99,38 -98,29 -102,24 -107,25 -114,31',
  '-41,-3 -35,-5 -36,-9 -40,-12 -44,-8',
  '114,-20 122,-18 130,-17 138,-19 146,-22 146,-35 112,-35',
  '-81,-4 -78,-10 -70,-18 -67,-22 -68,-30 -72,-30 -78,-12',
  '40,12 52,12 48,3 42,2 41,6',
  '14,-18 22,-20 24,-28 14,-28',
  '112,46 120,48 123,45 118,42',
];

const forestShapes = [
  '-78,2 -70,6 -60,6 -50,1 -47,-3 -50,-9 -58,-12 -68,-11 -76,-6',
  '10,4 18,4 29,3 29,-5 22,-7 13,-5',
  '-120,60 -108,60 -98,57 -88,54 -82,51 -78,48 -70,50 -66,47 -80,46 -95,50 -108,53 -116,55',
  '-90,36 -82,37 -76,42 -70,46 -74,42 -79,35 -84,31 -94,31',
  '30,60 45,62 62,62 80,62 100,62 112,60 104,56 98,57 86,56 74,57 60,57 50,56 38,56',
  '97,55 112,55 122,52 128,48 132,49 138,53 128,56 112,57',
  '120,50 127,51 134,45 128,41 124,44',
  '92,26 98,26 102,20 108,18 108,12 104,14 100,10 98,18 94,20',
  '106,26 118,30 121,28 116,23 108,22',
  '112,34 118,35 121,33 120,30 114,31',
  '108,4 119,7 119,-4 109,-3',
  '95,6 106,-3 104,-6 97,1',
  '130,0 142,-3 150,-9 140,-8 133,-4',
  '-92,17 -83,15 -78,9 -84,9',
  '10,60 18,61 16,57 12,57',
  '73,20 77,20 77,9 74,12',
  '43,-13 51,-13 48,-25 47,-18',
];

const mountainShapes = [
  '-162,62 -140,63 -133,60 -126,58 -119,52 -113,47 -108,41 -105,36 -108,35 -113,40 -119,47 -124,50 -131,56 -140,60 -150,61 -160,58',
  '-79,63 -64,61 -57,53 -62,52 -70,54 -78,55',
  '-96,62 -93,56 -86,55 -98,59',
  '72,39 80,42 84,42 74,36 80,31 88,28 98,30 103,27 104,34 98,36 88,36 80,36 74,34',
  '86,50 98,53 112,56 125,57 140,58 156,61 175,62 160,64 130,62 116,60 98,55',
  '155,61 163,60 163,56 157,51',
  '6,44 7,47 14,48 16,47 12,46 8,45',
  '36,42 47,40 48,38 56,38 54,34 50,32 45,37 38,37',
  '-80,0 -77,3 -73,8 -76,0 -77,-8 -70,-14 -66,-18 -66,-28 -70,-28 -70,-18 -76,-13',
  '-118,33 -108,30 -102,24 -97,18 -102,19 -108,26',
  '5,62 12,62 9,59 6,59',
  '36,14 40,12 38,7 35,9',
  '138,38 141,40 138,35 133,34',
  '88,50 98,51 100,47 92,46',
];

const borderLines = [
  '-123,49 -95,49 -89.5,48 -88.4,48.3 -84.8,46.8 -82.5,45.3 -82.4,43 -83,42 -79,42.7 -79,43.4 -76.5,44.2 -74.8,45 -71.3,45 -70,46.7 -69,47.4 -67.8,47 -67.3,45.2',
  '-117.2,32.5 -114.7,32.6 -111,31.3 -108.2,31.4 -106.4,31.8 -104.5,29.6 -103,29 -101.5,29.8 -99.5,27.5 -97.2,25.9',
  '-141,62 -141,60.2 -137.5,59 -135.5,59.7 -133.5,58.3 -130,56 -130,55',
  '-92.2,14.5 -91.8,16 -91,17.8 -89.2,17.8 -89,16',
  '-89.3,14.4 -87,13.8 -83.3,15',
  '-85.7,11 -83.7,10.9',
  '-83,8.3 -82.6,9.5',
  '-71.5,11.5 -72.5,9 -72,7 -67.5,6.2 -67.2,2.5 -67,1.2 -69.5,0.8 -69.9,-4.2 -73,-5 -73.9,-7.5 -72.5,-9.5 -70.5,-9.5 -70.5,-11 -68.7,-12.5 -69,-17 -69.5,-17.6 -70.4,-18.3',
  '-80.2,-3.5 -78.5,-4.8 -75.5,-2 -75.2,-0.1 -77.5,0.5 -79,1.5',
  '-75.2,-0.1 -72.5,-2.4 -69.9,-4.2',
  '-67,1.2 -64,2 -64,4 -60.7,5 -60,8.3',
  '-60.7,5 -59.8,2 -57,2 -54.5,2.3 -52,4',
  '-57.3,6 -58,4 -57,2',
  '-54,5.8 -54.5,2.3',
  '-70.5,-11 -68,-11 -65.3,-9.8 -65,-12 -60.5,-13.8 -60,-16.2 -58.3,-16.3 -58,-20 -62.3,-20.5 -62.7,-22.2 -67,-22.8 -68.5,-20 -69.5,-17.6',
  '-58,-20 -58,-22 -55.8,-22.3 -54.3,-24 -54.6,-25.6 -57.7,-25.3 -62.7,-22.2',
  '-67,-22.8 -68.5,-25 -69.5,-30',
  '-1.8,35 -1.2,32.3 -3.5,31 -8.7,28.7 -8.7,26 -12,26 -12,23.4 -13,21.3 -17,21.3',
  '-13,27.7 -8.7,27.7',
  '-8.7,27.3 -4.8,25 1.5,21 3.3,19 5.8,19.5 12,23.5 15,23 24,19.5',
  '-4.8,25 -6.5,25 -5.5,15.5 -12,15',
  '8.6,37 8.2,34.5 9.5,30.2 9.8,28 9.9,26.3 12,23.5',
  '9.5,30.2 11.5,33.1',
  '24,19.5 24,20 25,20 25,31.6',
  '25,22 37,22',
  '15,23 15.5,17 13.5,13.7',
  '24,19.5 24,15.7 22,13 22.8,11',
  '3.3,19 4.2,16.5 3.5,15.3 0.2,15 -3,13.7 -5.5,11 -8,10.2 -11.5,12.2 -12,15 -16.5,16.5',
  '3.6,11.7 4,13.5 7,13 13.5,13.7 14.5,12.5 13,9 10,7 8.8,4.8',
  '2.7,6.3 2.8,9 3.6,11.7 0.2,15',
  '-3,5 -2.8,11 0,11 1.2,6',
  '-7.5,4.4 -8.3,7.5 -8,10.2',
  '-11.3,7 -13.3,9 -8.3,7.5',
  '14.5,12.5 15.5,10 14.5,6.2 16,2 18.5,3.5 22.5,4 27.4,5',
  '15.5,8 19,9 22.8,11 24,8.7 27.4,5',
  '24,8.7 28,9.5 33,10 34,11 36,14.3 36.5,17 38.5,18',
  '34,9.5 33,8 35.8,4.8 41.8,4 45,5 48,8 43,9 42,11',
  '36.5,14.3 40,14.5 42.5,12.5',
  '35.8,4.8 34,4.2 34,-1 37.7,-3 39.3,-4.7',
  '41.8,4 41,-1.6',
  '27.4,5 30.8,3.5 29.6,-1.3 29.3,-4.5 30.7,-8.3 28.5,-8.5 28.5,-12 29.8,-12.2 29.8,-13.4 24,-11 22,-11.2 21.8,-7.3 17.5,-8 16.5,-5.9 12.3,-6',
  '11.3,2.2 13.2,2.2 14.4,-1 14,-2.4 12,-2.5 11.2,-4',
  '18.5,3.5 17.8,0 16,-2.5 15.2,-4.8 13,-4.7',
  '24,-11 24,-13 22,-13 22,-16.2 23.3,-17.6 18.5,-17.4 11.8,-17.3',
  '21,-18.3 21,-22 20,-22 20,-28',
  '23.3,-17.6 25.3,-17.8 28.5,-15.8 30.3,-15.7 33,-17.5 32.5,-21.3 31.3,-22.4 29.3,-22.2 27,-20 25.3,-17.8',
  '29.3,-22.2 25.5,-25.7 20.5,-26.8',
  '33,-9.5 33,-14 35,-17 36,-15 34.8,-11.5 40.4,-10.5',
  '30.7,-8.3 33,-9.5',
  '30.3,-15.7 33,-14',
  '-1.7,43.3 3,42.5',
  '-8.8,41.9 -6.5,41.8 -7,39 -7.4,37.2',
  '2.5,51.1 6,49.5 8.2,49 7.6,47.6 6,46.3 7,45.8 7.5,43.8',
  '14.2,53.9 14.8,51 12.3,50.2 13.8,48.8 13,47.5 9.5,47.5 7.6,47.6',
  '14.8,51 18.8,49.5 22.5,49.1 24,50.8 23.5,53 22.8,54.4 19.8,54.4',
  '22.5,49.1 22.8,48 26.5,48.3 29,47.8 30,46.4 28.2,45.5',
  '23.6,51.6 30.5,51.4 31.8,52.2 34,52.2 36,50.4 40,49.6 38.3,47.2',
  '21,56.3 25,56.3 28,56.1 27.8,57.5 27.5,59.2',
  '28,56.1 30.8,55.6 32,54 31.8,52.2',
  '24.4,57.9 27.5,57.5',
  '23.5,54 26,55.5 28,56.1',
  '22.8,48 20.3,46.2 22,44.5 27,44.1 28.5,43.8',
  '13.7,46.5 16.2,46.8 17,48 20,48.3 22.8,48',
  '13.7,45.6 16.5,46.4 18.8,45.8 20.3,46.2',
  '19,45 15.8,45 18,43 19.2,43.5 19,45',
  '22,44.5 22.5,42.3 23,41.3 26.3,41.7 28,42',
  '19.5,41.8 21,42 22.5,42.3',
  '20.2,39.6 21,41 23,41.3',
  '28,60.6 31.5,62.5',
  '11.2,59 12.5,61.5',
  '36,36 37,36.8 42.3,37.2 44.8,37.3 44,39.4 43.5,41.1 41.5,41.5',
  '42.3,37.2 41,34.5 38.8,33.3 36,32.5 35.6,33.2',
  '44.8,37.3 46,35.8 45.5,33.8 47.8,31 48.5,30',
  '38.8,33.3 39.2,32.1 42,31.2 44.7,29.2 46.5,29.1 48,30',
  '39.2,32.1 37,31.5 38,30.5 36,29.2 35,29.4',
  '42.8,16.4 47,17 52,19 53,16.7',
  '52,19 55,20 55.2,22.7 56,24',
  '40,43.5 44,42.7 48,41.8',
  '43.5,41.1 46.5,41.3',
  '44.8,39.5 48,39.5 48.8,38.4',
  '54,37.3 57,38.2 61.2,35.6 60.6,33 61,30 62.8,27.2 61.6,25.2',
  '61.2,35.6 64.5,36 66.5,37.4 71,38 71.5,36.7 75,37',
  '61,29.9 66,29.8 66.5,31 69.3,32 70,34 71.5,36.3 75,37',
  '68,23.8 71,24.5 70,27.8 73,29.8 74.5,32 74,34 77,35.3 75,37',
  '56,45 56,41.3 58.5,42.7 60,42 62,39.8 66.5,37.4',
  '56,45 58.5,45.5 62,43.5 66,42 68,41 71,42.3 74,43.2 80,42.3 80.3,45 82.5,45.3 85.5,47.1 87.3,49.1',
  '49,46.3 47,48.3 47.5,50.3 51,51.6 55,51 59,50.7 61.5,51.3 61,53.9 65,54.5 69,55.3 71,54.2 74,53.7 77,54 80,51 83.5,50.9 87.3,49.1',
  '80,42.3 76,40.4 73.8,39.5 75,37',
  '67,40 70,40.5 73,40.8 70,39.5 68,38.5',
  '77,35.3 79,32.5 81,30.2 86,28 88.8,27.5 92,27.8 96.5,28.5 98.5,27.5 97.8,24 100.5,21.7 102.2,22.5 105.5,23.2 108,21.6',
  '80.2,29.7 80,28.8 85,26.6 88.2,26.5 89,25.8 88.6,23.5 89,21.8',
  '88.2,26.5 92,26.8',
  '89,25.8 92,25.2 91.5,23.5 92.3,20.8',
  '92.5,22 94.5,25 97,27.7',
  '101,21.5 100.2,20.4 97.8,18.5 98.6,16 99.2,13 98.8,10.2',
  '102.2,22.5 104.8,20 104,18.9 107.5,15 107.5,12.3 106,11 104.5,10.4',
  '100.2,20.4 101.2,17.6 104,18.2 105.5,15 105.2,14.3 102.6,13.5 102.9,11.7',
  '105.2,14.3 107.5,14.5',
  '87.3,49.1 92,50.7 98,50.2 98.5,52 102.3,50.6 107,50 113,49.5 116.7,49.8 115.7,47.8 119.8,46.8 112,45 111,43.5 105,41.7 97,42.7 91,45.2 87.3,49.1',
  '116.7,49.8 119.8,53 121,53.3 125.5,53 127.5,50 130.8,48 134.7,48.3 133,45.2 131,44.8 130.7,42.4 128,42 124.4,40',
  '126.7,37.8 128.4,38.6',
  '109.7,1.9 111,1 114.5,1.5 115.5,4 117.6,4.1',
];

const stateLines = [
  '-120,62 -120,54 -114,49',
  '-110,62 -110,49',
  '-102,62 -101.5,49',
  '-125,60 -94.8,60',
  '-95,53 -89,57',
  '-95,49 -95,53',
  '-79.5,51.5 -79.5,47',
  '-67,55 -60,52 -57,52',
  '-124,46 -117,46 -111,45 -104,45 -97,45.9',
  '-120,42 -104,41 -95,40.5',
  '-117,49 -117,42',
  '-114,42 -114,35',
  '-109,41 -109,31.5',
  '-102,41 -102,37',
  '-104,49 -104,41',
  '-114,37 -94.6,36.8',
  '-103,37 -103,32 -107,32',
  '-96.5,46 -96.5,43 -91.5,43.5',
  '-94.5,40 -94.3,33.5 -89,33',
  '-91,43 -91,40 -89,37 -90,35 -91,31',
  '-87.5,41.5 -87.8,38',
  '-84.8,41.7 -84.8,39',
  '-88,35 -88,30.5',
  '-85.5,35 -85,31 -82,30.6',
  '-89,36.5 -76,36.5',
  '-80.5,42 -80.5,40 -75,39.7',
  '141,-2.6 141,-9.1',
  '129,-14.9 129,-35',
  '138,-16.5 138,-26 129,-26',
];

const MAP_WIDTH = 2414;
const MAP_HEIGHT = 600;
const WORLD = 2048;

// Web Mercator at zoom 3, with the date line at x=416 and the equator at y=446
const toPath = (points: string, close = false) => {
  const coords = points.split(' ').map((pair) => {
    const [lon, lat] = pair.split(',').map(Number);
    const x = 416 + ((lon + 180) * WORLD) / 360;
    const y = 446 - (WORLD / (2 * Math.PI)) * Math.log(Math.tan(Math.PI / 4 + (lat * Math.PI) / 360));
    return `${x.toFixed(1)} ${y.toFixed(1)}`;
  });
  return `M${coords.join('L')}${close ? 'Z' : ''}`;
};

const land = landShapes.map((s) => toPath(s, true)).join('');
const lakes = lakeShapes.map((s) => toPath(s, true)).join('');
const deserts = desertShapes.map((s) => toPath(s, true)).join('');
const forests = forestShapes.map((s) => toPath(s, true)).join('');
const mountains = mountainShapes.map((s) => toPath(s, true)).join('');
const borders = borderLines.map((s) => toPath(s)).join('');
const states = stateLines.map((s) => toPath(s)).join('');

const dateLine =
  'M427 0L359 89L416 133V454H531V429H514L516 408H551L588 499V512H563V507H492L459 535V600';

type Label = [text: string, x: number, y: number];

const countryLabels: Label[] = [
  ['Mongolia', -22, 150],
  ['China', -18, 222],
  ['Japan', 191, 209],
  ['South Korea', 114, 230],
  ['Indonesia', 52, 475],
  ['Papua New', 230, 479],
  ['Guinea', 230, 497],
  ['Australia', 157, 599],
  ['Canada', 848, 79],
  ['United States', 863, 205],
  ['Mexico', 857, 312],
  ['Venezuela', 1063, 405],
  ['Colombia', 1007, 430],
  ['Brazil', 1122, 501],
  ['Peru', 1005, 515],
  ['Bolivia', 1072, 549],
  ['Chile', 1036, 608],
  ['Norway', 1486, 11],
  ['United', 1416, 56],
  ['Kingdom', 1416, 74],
  ['Poland', 1546, 96],
  ['Ukraine', 1624, 125],
  ['Germany', 1498, 127],
  ['France', 1455, 157],
  ['Spain', 1420, 190],
  ['Italy', 1508, 178],
  ['Turkey', 1641, 211],
  ['Kazakhstan', 1822, 138],
  ['Iraq', 1684, 254],
  ['Iran', 1748, 263],
  ['Afghanistan', 1825, 244],
  ['Pakistan', 1830, 280],
  ['Algeria', 1449, 285],
  ['Libya', 1538, 292],
  ['Egypt', 1610, 284],
  ['Saudi Arabia', 1697, 314],
  ['Mali', 1430, 349],
  ['Niger', 1496, 350],
  ['Chad', 1550, 372],
  ['Sudan', 1611, 354],
  ['Nigeria', 1486, 398],
  ['Ethiopia', 1665, 403],
  ['Kenya', 1657, 448],
  ['DR Congo', 1569, 461],
  ['Tanzania', 1651, 488],
  ['Angola', 1532, 523],
  ['Namibia', 1529, 564],
  ['Botswana', 1580, 588],
  ['Madagascar', 1712, 576],
  ['Mongolia', 2026, 150],
  ['China', 2029, 222],
  ['South Korea', 2161, 230],
  ['Japan', 2238, 209],
  ['India', 1892, 318],
  ['Thailand', 2014, 336],
  ['Indonesia', 2099, 475],
  ['Papua New', 2278, 479],
  ['Guinea', 2278, 497],
  ['Australia', 2205, 600],
];

const oceanLabels: Label[] = [
  ['North', 495, 205],
  ['Pacific', 494, 231],
  ['Ocean', 494, 257],
  ['North', 1211, 217],
  ['Atlantic', 1211, 243],
  ['Ocean', 1211, 269],
  ['South', 662, 604],
  ['South', 1358, 600],
  ['Indian', 1897, 569],
  ['Ocean', 1897, 595],
];

const clusterStyles = {
  blue: { color: '#008cff', radius: 24 },
  yellow: { color: '#ffbf00', radius: 26 },
  red: { color: '#ff0000', radius: 31 },
};

type ClusterColor = keyof typeof clusterStyles;

const clusters: { count: number; x: number; y: number; color: ClusterColor }[] = [
  { count: 5, x: 189, y: 230, color: 'blue' },
  { count: 13, x: 753, y: 109, color: 'yellow' },
  { count: 23, x: 888, y: 117, color: 'yellow' },
  { count: 66, x: 1064, y: 156, color: 'yellow' },
  { count: 137, x: 747, y: 217, color: 'red' },
  { count: 228, x: 957, y: 251, color: 'red' },
  { count: 5, x: 854, y: 326, color: 'blue' },
  { count: 18, x: 1019, y: 420, color: 'yellow' },
  { count: 3, x: 1163, y: 505, color: 'blue' },
  { count: 27, x: 1581, y: 15, color: 'yellow' },
  { count: 9, x: 1691, y: 57, color: 'blue' },
  { count: 150, x: 1453, y: 127, color: 'red' },
  { count: 19, x: 1627, y: 198, color: 'yellow' },
  { count: 16, x: 1522, y: 228, color: 'yellow' },
  { count: 9, x: 1413, y: 255, color: 'blue' },
  { count: 20, x: 1706, y: 301, color: 'yellow' },
  { count: 9, x: 1487, y: 390, color: 'blue' },
  { count: 3, x: 1380, y: 411, color: 'blue' },
  { count: 4, x: 1657, y: 441, color: 'blue' },
  { count: 15, x: 1600, y: 601, color: 'yellow' },
  { count: 66, x: 1878, y: 330, color: 'yellow' },
  { count: 14, x: 2102, y: 198, color: 'yellow' },
  { count: 41, x: 2089, y: 316, color: 'yellow' },
  { count: 46, x: 2068, y: 437, color: 'yellow' },
];

// x/y is the tip of the pin
const pins = [
  { x: 542, y: 322 },
  { x: 1802, y: 87 },
  { x: 51, y: 638 },
  { x: 386, y: 672 },
  { x: 2099, y: 638 },
];

// Degrees are measured clockwise from the top
const arc = (r: number, from: number, to: number) => {
  const point = (deg: number) => {
    const a = (deg * Math.PI) / 180;
    return `${(r * Math.sin(a)).toFixed(1)} ${(-r * Math.cos(a)).toFixed(1)}`;
  };
  return `M${point(from)}A${r} ${r} 0 0 1 ${point(to)}`;
};

const Cluster = ({ count, x, y, color }: { count: number; x: number; y: number; color: ClusterColor }) => {
  const { color: fill, radius } = clusterStyles[color];
  const rings = [
    { r: radius + 7, opacity: 0.6 },
    { r: radius + 17, opacity: 0.35 },
    { r: radius + 27, opacity: 0.15 },
  ];
  return (
    <g transform={`translate(${x} ${y})`}>
      {rings.map(({ r, opacity }) => (
        <path
          key={r}
          d={arc(r, -42, 42) + arc(r, 77, 166) + arc(r, 194, 283)}
          fill="none"
          stroke={fill}
          strokeWidth="7"
          opacity={opacity}
        />
      ))}
      <circle r={radius} fill={fill} />
      <text x="-1" y="7" textAnchor="middle" className="fill-black font-['Liberation_Sans',Arial,sans-serif] text-[21px] font-bold">
        {count}
      </text>
    </g>
  );
};

const Pin = ({ x, y }: { x: number; y: number }) => (
  <g transform={`translate(${x} ${y})`}>
    <path
      d="M0 0C-1 -22 -6 -29 -14 -41C-19 -48 -21 -53 -21 -59A21 21 0 0 1 21 -59C21 -53 19 -48 14 -41C6 -29 1 -22 0 0Z"
      fill="url(#pin-fill)"
      stroke="#b5352b"
      strokeWidth="2"
    />
    <circle cy="-57" r="7" fill="#5c100c" />
  </g>
);

const Terrain = () => (
  <>
    <defs>
      <clipPath id="land">
        <path d={land} />
        <path d={land} transform={`translate(-${WORLD} 0)`} />
      </clipPath>
      <linearGradient id="pin-fill" x1="0" y1="0" x2="0" y2="1">
        <stop offset="0" stopColor="#fa6e66" />
        <stop offset="1" stopColor="#f23b33" />
      </linearGradient>
      <filter id="coast" filterUnits="userSpaceOnUse" x="0" y="0" width={MAP_WIDTH} height={MAP_HEIGHT}>
        <feTurbulence type="fractalNoise" baseFrequency="0.09" numOctaves="3" seed="4" />
        <feDisplacementMap in="SourceGraphic" scale="9" xChannelSelector="R" yChannelSelector="G" />
      </filter>
      <filter id="rough" filterUnits="userSpaceOnUse" x="0" y="0" width={MAP_WIDTH} height={MAP_HEIGHT}>
        <feGaussianBlur in="SourceGraphic" stdDeviation="5" result="soft" />
        <feTurbulence type="fractalNoise" baseFrequency="0.035" numOctaves="5" seed="8" result="noise" />
        <feDisplacementMap in="soft" in2="noise" scale="75" xChannelSelector="R" yChannelSelector="G" />
      </filter>
      <filter id="clearings" filterUnits="userSpaceOnUse" x="0" y="0" width={MAP_WIDTH} height={MAP_HEIGHT} colorInterpolationFilters="sRGB">
        <feTurbulence type="fractalNoise" baseFrequency="0.07" numOctaves="5" seed="15" />
        <feColorMatrix values="0 0 0 0 0.94  0 0 0 0 0.94  0 0 0 0 0.88  14 0 0 0 -8.4" />
      </filter>
      <filter id="woods" filterUnits="userSpaceOnUse" x="0" y="0" width={MAP_WIDTH} height={MAP_HEIGHT} colorInterpolationFilters="sRGB">
        <feTurbulence type="fractalNoise" baseFrequency="0.04" numOctaves="5" seed="31" />
        <feColorMatrix values="0 0 0 0 0.78  0 0 0 0 0.89  0 0 0 0 0.74  0 12 0 0 -7" />
      </filter>
      <filter id="relief" filterUnits="userSpaceOnUse" x="0" y="0" width={MAP_WIDTH} height={MAP_HEIGHT} colorInterpolationFilters="sRGB">
        <feTurbulence type="fractalNoise" baseFrequency="0.16" numOctaves="4" seed="2" />
        <feDiffuseLighting surfaceScale="2.6" lightingColor="#ffffff" result="light">
          <feDistantLight azimuth="225" elevation="55" />
        </feDiffuseLighting>
        <feColorMatrix in="light" values="0 0 0 0 0.35  0 0 0 0 0.35  0 0 0 0 0.32  -3.2 0 0 0 2.5" result="shade" />
        <feGaussianBlur in="SourceAlpha" stdDeviation="6" result="mask" />
        <feComposite in="shade" in2="mask" operator="in" />
      </filter>
    </defs>

    <rect width={MAP_WIDTH} height={MAP_HEIGHT} fill="#a3ccff" />
    <g filter="url(#coast)">
      <g clipPath="url(#land)">
        <rect width={MAP_WIDTH} height={MAP_HEIGHT} fill="#dfebcb" />
        <rect width={MAP_WIDTH} height={MAP_HEIGHT} filter="url(#woods)" opacity="0.8" />
        <g filter="url(#rough)">
          <path d={forests} fill="#c1e1bc" />
          <path d={forests} fill="#c1e1bc" transform={`translate(-${WORLD} 0)`} />
        </g>
        <rect width={MAP_WIDTH} height={MAP_HEIGHT} filter="url(#clearings)" opacity="0.6" />
        <g filter="url(#rough)">
          <path d={deserts} fill="#f8f1da" />
          <path d={deserts} fill="#f8f1da" transform={`translate(-${WORLD} 0)`} />
          <path d={mountains} fill="#eeebe2" opacity="0.85" />
          <path d={mountains} fill="#eeebe2" opacity="0.85" transform={`translate(-${WORLD} 0)`} />
        </g>
        <g filter="url(#relief)" opacity="0.6">
          <path d={mountains} />
          <path d={mountains} transform={`translate(-${WORLD} 0)`} />
        </g>
      </g>
      <path d={lakes} fill="#a3ccff" />
      <g fill="none" stroke="#7b7d78" strokeWidth="1.3" strokeLinejoin="round">
        <path d={borders} />
        <path d={borders} transform={`translate(-${WORLD} 0)`} />
      </g>
      <path d={states} fill="none" stroke="#b4b5af" strokeWidth="1" strokeDasharray="10 4" />
    </g>

    <g fill="none" stroke="#8b1a2b" strokeWidth="1.5" strokeDasharray="12 4">
      <path d={dateLine} />
      <path d={dateLine} transform={`translate(${WORLD} 0)`} />
      <path d={`M0 446H${MAP_WIDTH}`} stroke="#93606f" strokeWidth="2" strokeDasharray="11 5" />
    </g>
  </>
);

const GoogleLogo = () => (
  <text
    x="13"
    y="584"
    className="fill-[#4285f4] stroke-white/70 font-['Lato',sans-serif] text-[38px] font-bold [paint-order:stroke]"
    strokeWidth="6"
    strokeLinejoin="round"
  >
    G<tspan fill="#ea4335">o</tspan>
    <tspan fill="#fbbc05">o</tspan>g<tspan fill="#34a853">l</tspan>
    <tspan fill="#ea4335">e</tspan>
  </text>
);

const Pegman = () => (
  <svg viewBox="0 0 24 38" className="h-[38px] w-6" aria-hidden="true">
    <path
      d="M7 14h10q2 0 3 3l3 9-3 1-2-4v14h-5V27h-2v10H6V23l-2 4-3-1 3-9q1-3 3-3z"
      fill="#f9b529"
      stroke="#8d7a55"
      strokeWidth="1.5"
    />
    <path d="M8 14h8l-4 6z" fill="#e57c23" />
    <circle cx="12" cy="8" r="6.5" fill="#fcb828" stroke="#c98a13" />
  </svg>
);

const AudienceMap = () => (
  <div className="relative h-[600px] overflow-hidden font-['Roboto',sans-serif]">
    <svg
      viewBox={`0 0 ${MAP_WIDTH} ${MAP_HEIGHT}`}
      preserveAspectRatio="xMidYMid slice"
      className="block size-full"
      role="img"
      aria-label="Visitors by location"
    >
      <Terrain />
      <g
        className="fill-[#22252a] stroke-white/80 text-lg font-medium [paint-order:stroke]"
        strokeWidth="4"
        strokeLinejoin="round"
        textAnchor="middle"
      >
        {countryLabels.map(([text, x, y]) => (
          <text key={`${text}-${x}`} x={x} y={y}>
            {text}
          </text>
        ))}
      </g>
      <g className="fill-[#5282c5] text-[23px] tracking-[4px] italic" textAnchor="middle">
        {oceanLabels.map(([text, x, y]) => (
          <text key={`${text}-${x}-${y}`} x={x} y={y}>
            {text}
          </text>
        ))}
      </g>
      {pins.map((pin) => (
        <Pin key={`${pin.x}-${pin.y}`} {...pin} />
      ))}
      {clusters.map((cluster) => (
        <Cluster key={`${cluster.x}-${cluster.y}`} {...cluster} />
      ))}
      <GoogleLogo />
    </svg>

    {/* Map type */}
    <div className="absolute top-5 left-5 flex h-[71px] rounded-sm bg-white text-[22px] shadow-md">
      <button className="border-r border-gray-200 px-[22px] font-medium text-black">Map</button>
      <button className="px-[21px] text-[#565656]">Satellite</button>
    </div>

    {/* Street view and zoom */}
    <div className="absolute right-5 bottom-12 flex w-14 flex-col gap-5">
      <button aria-label="Street View" className="flex h-14 items-center justify-center rounded-sm bg-white shadow-md">
        <Pegman />
      </button>
      <div className="flex flex-col items-center rounded-sm bg-white shadow-md">
        <button aria-label="Zoom in" className="flex h-[54px] w-full items-center justify-center">
          <svg viewBox="0 0 20 20" className="size-5" fill="#666" aria-hidden="true">
            <path d="M7 0h6v7h7v6h-7v7H7v-7H0V7h7z" />
          </svg>
        </button>
        <div className="h-0.5 w-9 bg-[#e6e6e6]" />
        <button aria-label="Zoom out" className="flex h-[54px] w-full items-center justify-center">
          <svg viewBox="0 0 20 20" className="size-5" fill="#666" aria-hidden="true">
            <path d="M0 7h20v6H0z" />
          </svg>
        </button>
      </div>
    </div>

    <div className="absolute right-0 bottom-0 flex h-7 items-center bg-[#f5f5f5]/70 text-xl text-[#444]">
      <span className="pr-3 pl-2.5">Map data ©2017</span>
      <a href="#terms" className="px-3">
        Terms of Use
      </a>
    </div>
  </div>
);

// ---------------------------------------------------------------------------
// Page
// ---------------------------------------------------------------------------

const navItems: { icon: IconName; label: string; active?: boolean }[] = [
  { icon: 'dashboard', label: 'Dashboard' },
  { icon: 'heartbeat', label: 'Live' },
  { icon: 'bolt', label: 'Events' },
  { icon: 'filter', label: 'Funnels' },
  { icon: 'users', label: 'Audience', active: true },
  { icon: 'link', label: 'Links' },
  { icon: 'flag', label: 'Goals' },
  { icon: 'cogs', label: 'Settings' },
];

const Sidebar = () => (
  <aside className="flex w-[120px] shrink-0 flex-col bg-[#0b72cb] text-white">
    <a href="#home" aria-label="Home" className="flex h-[118px] shrink-0 items-center justify-center bg-[#b9dcf5]">
      <Logo />
    </a>
    <nav>
      {navItems.map((item) => (
        <a
          key={item.icon}
          href={`#${item.label.toLowerCase()}`}
          aria-label={item.label}
          className={clsx('flex h-[111px] items-center justify-center', item.active && 'bg-[#0d8bf2]')}
        >
          <Icon name={item.icon} className="h-[37px]" />
        </a>
      ))}
    </nav>
  </aside>
);

const headerButton =
  'flex h-[75px] items-center border-t-2 border-[#c8c8c8] bg-[#eee] px-[30px] pb-0.5 text-2xl font-bold shadow-sm';

const Header = () => (
  <header className="flex h-[118px] shrink-0 items-center justify-between bg-white pr-[34px] pl-[66px]">
    <button className={clsx(headerButton, 'gap-2.5')}>
      WEBSITEGOODIES.COM (FREE) <Caret />
    </button>
    <div className="flex gap-10">
      <button className={clsx(headerButton, 'gap-3')}>
        <Icon name="share" className="size-6" />
        SHARE
      </button>
      <button className={clsx(headerButton, 'gap-3')}>
        MY ACCOUNT <Caret />
      </button>
    </div>
  </header>
);

const tabs = ['Location', 'Language', 'Browser Family', 'Browser', 'Platform', 'Screen Size'];

const Tabs = () => (
  <div role="tablist" className="flex items-end gap-2 border-b-2 border-[#ccc]">
    {tabs.map((tab, i) => (
      <button
        key={tab}
        role="tab"
        aria-selected={i === 0}
        className={clsx(
          'rounded-t-lg px-[30px] font-bold',
          i === 0
            ? '-mb-0.5 h-20 border-2 border-b-0 border-[#0d8bf2] bg-[#0b72cb] pb-1 text-white'
            : 'h-[70px] border-x-2 border-[#ccc] bg-[#ccc] pt-0.5'
        )}
      >
        {tab}
      </button>
    ))}
  </div>
);

const columns = ['Location', 'Visits', 'Page Views', 'PPV', 'Avg. Time', 'Bounce Rate', 'Conversions', 'Conv. Rate', 'Revenue'];

const rows = [
  ['United States', '1,361', '3,627', '2.7', '1.4 min', '68.9%', '0', '0.0%', '$0.00'],
  ['United Kingdom', '201', '476', '2.4', '1.4 min', '63.2%', '0', '0.0%', '$0.00'],
  ['India', '159', '300', '1.9', '0.8 min', '64.2%', '0', '0.0%', '$0.00'],
  ['Germany', '156', '408', '2.6', '2.1 min', '64.7%', '0', '0.0%', '$0.00'],
  ['Canada', '101', '158', '1.6', '0.6 min', '83.2%', '0', '0.0%', '$0.00'],
];

const cellClass = (i: number) =>
  clsx(
    'whitespace-nowrap',
    i === 0 ? 'w-full pl-10 text-left' : 'pl-[21px] text-right',
    i === columns.length - 1 ? 'pr-10' : 'pr-5'
  );

const LocationTable = () => (
  <div className="border-2 border-[#ccc]">
    <table className="w-full">
      <thead>
        <tr className="h-[88px] bg-[#eee]">
          {columns.map((column, i) => (
            <th key={column} scope="col" className={cellClass(i)}>
              {column}
            </th>
          ))}
        </tr>
      </thead>
      <tbody>
        {rows.map((row) => (
          <tr key={row[0]} className="h-[88px] bg-white odd:bg-[#f9f9f9]">
            {row.map((value, i) => (
              <td key={columns[i]} className={cellClass(i)}>
                {value}
              </td>
            ))}
          </tr>
        ))}
      </tbody>
    </table>
  </div>
);

export default function App() {
  return (
    <div className="flex h-screen overflow-hidden bg-[#ecf1f5] font-['Liberation_Sans',Arial,sans-serif] text-[28px] leading-10 text-[#333]">
      <Sidebar />
      <div className="flex min-w-0 flex-1 flex-col">
        <Header />
        <main className="flex-1 overflow-y-auto pr-[34px] pl-[68px] [scrollbar-width:none]">
          <div className="flex items-start justify-between pt-[54px] pb-[42px]">
            <h1 className="text-[64px] leading-[70px]">Audience</h1>
            <button className="flex h-[72px] items-center gap-3 rounded-lg border-2 border-[#ddd] bg-white pr-4 pl-[18px]">
              <Icon name="calendar" className="size-7" />
              July 11, 2017 – August 9, 2017
              <Caret />
            </button>
          </div>
          <Tabs />
          <AudienceMap />
          <LocationTable />
        </main>
      </div>
    </div>
  );
}
